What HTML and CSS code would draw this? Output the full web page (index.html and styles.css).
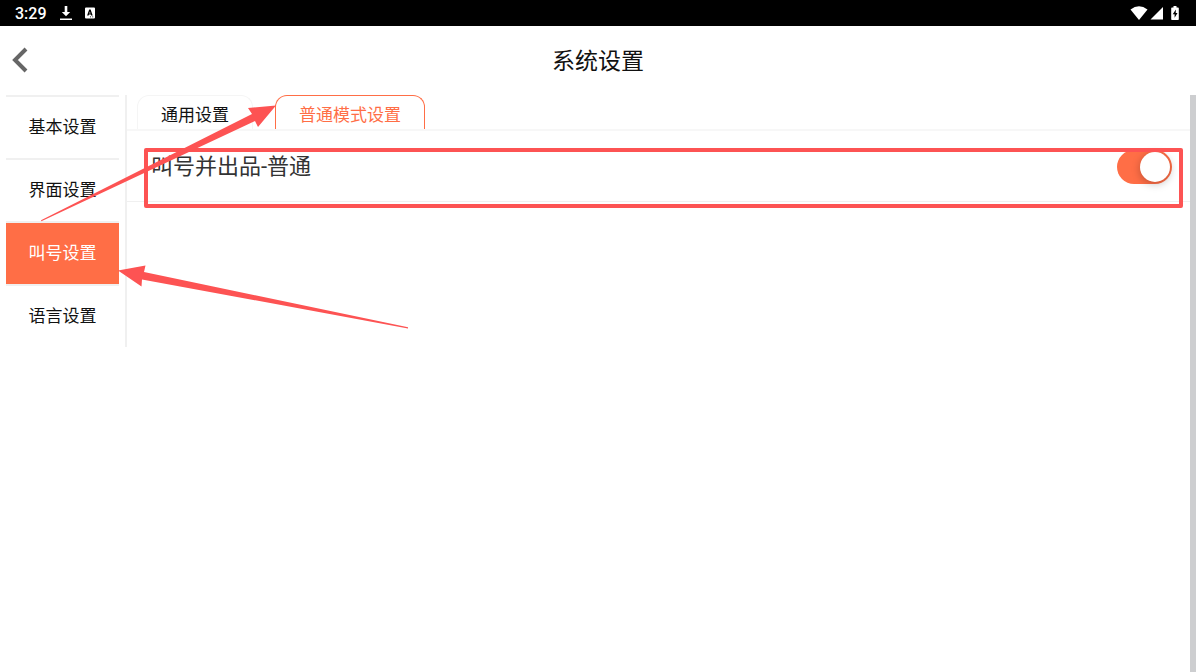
FILE: index.html
```
<!DOCTYPE html>
<html lang="zh-CN">

	<head>
		<meta charset="UTF-8">
		<meta name="viewport" content="width=device-width, initial-scale=1">
		<title>系统设置</title>
		<link rel="stylesheet" href="styles.css">
	</head>

	<body>
		<div class="status">
			<span class="time">3:29</span>
			<svg class="download" width="12" height="16" viewBox="0 0 12 16">
				<path d="M4.7 1h2.6v6h2.9L6 11.2 1.8 7h2.900z" />
				<path d="M0 13.500h12v1.500H0z" />
			</svg>
			<svg class="ime" width="10" height="12" viewBox="0 0 10 12">
				<path fill-rule="evenodd" d="M1 .5h8a1 1 0 0 1 1 1v9a1 1 0 0 1-1 1H1a1 1 0 0 1-1-1v-9a1 1 0 0 1 1-1zM4.200 2.500L2.100 8.600h1.500l.4-1.200h1.800l.4 1.200h1.500L5.600 2.500zM4.900 4.500l.6 1.900H4.300zM5 9.400v.8h1v-.8zM7.200 9.400v.8h1v-.8z" />
			</svg>
			<div class="signals">
				<svg width="18" height="14" viewBox="0 0 18 14">
					<path d="M.5 3.6Q9-3 17.500 3.600L9 14z" />
				</svg>
				<svg width="13" height="14" viewBox="0 0 13 14">
					<path d="M13 1v12.500H.5z" />
				</svg>
				<svg class="battery" width="8" height="14" viewBox="0 0 8 14">
					<path fill-rule="evenodd" d="M2.500 0h3v1.400H7a.8.8 0 0 1 .8.8v11a.8.8 0 0 1-.8.8H1a.8.8 0 0 1-.8-.8v-11a.8.8 0 0 1 .8-.8h1.500zM4.900 3.500L1.700 8.300h1.900v3.500l2.900-4.900H4.700z" />
				</svg>
			</div>
		</div>

		<header class="header">
			<button class="back" type="button" aria-label="返回">
				<svg width="16" height="26" viewBox="0 0 16 26">
					<path d="M14 2L3 13l11 11" />
				</svg>
			</button>
			<h1>系统设置</h1>
		</header>

		<div class="main">
			<nav class="menu">
				<a href="#">基本设置</a>
				<a href="#">界面设置</a>
				<a href="#" class="current">叫号设置</a>
				<a href="#">语言设置</a>
			</nav>

			<section class="content">
				<div class="tabs">
					<button type="button">通用设置</button>
					<button type="button" class="current">普通模式设置</button>
				</div>
				<div class="row">
					<label for="call">叫号并出品-普通</label>
					<input class="switch" type="checkbox" id="call" checked>
					<div class="mark"></div>
				</div>
			</section>

			<div class="scrollbar"></div>

			<!-- 箭头 -->
			<svg class="arrows" width="420" height="240" viewBox="0 0 420 240">
				<path d="M41 125.300L252 19 248 13 276 10.500 258 32 255 26 41.400 126.300z" />
				<path d="M118 175.500L145.500 170.500 144 177 408 232.200 408 233.400 142 184.500 141.500 191.500z" />
			</svg>
		</div>
	</body>

</html>
```

FILE: styles.css
```
* {
	margin: 0;
	padding: 0;
	box-sizing: border-box;
}

body {
	min-height: 100vh;
	display: flex;
	flex-direction: column;
	background: #fff;
	color: #111;
	font-family: Roboto, "Noto Sans CJK SC", sans-serif;
}

button {
	border: none;
	background: none;
	font: inherit;
	color: inherit;
	cursor: pointer;
}

.status {
	height: 26px;
	padding: 0 17px 0 15px;
	display: flex;
	align-items: center;
	background: #000;
	color: #fff;
	font-size: 16px;
	font-weight: 500;
	line-height: 24px;
}

.status svg {
	fill: #fff;
}

.time {
	padding-top: 2px;
}

.download {
	margin-left: 13px;
}

.ime {
	margin-left: 13px;
}

.signals {
	margin-left: auto;
	display: flex;
	align-items: center;
	gap: 2px;
}

.battery {
	margin-left: 6px;
}

.header {
	height: 69px;
	padding: 0 12px 2px;
	display: grid;
	grid-template-columns: 16px 1fr 16px;
	align-items: center;
}

.back {
	height: 26px;
}

.back svg {
	display: block;
	fill: none;
	stroke: #666;
	stroke-width: 4;
}

.header h1 {
	padding-top: 4px;
	font-size: 23px;
	font-weight: 400;
	line-height: 34px;
	text-align: center;
}

.main {
	flex: 1;
	display: flex;
	position: relative;
}

.menu {
	width: 127px;
	align-self: flex-start;
	padding: 0 6px;
	border-right: 2px solid #f0f0f0;
}

.menu a {
	display: block;
	height: 63px;
	border-top: 2px solid #f0f0f0;
	color: #111;
	font-size: 17px;
	line-height: 60px;
	text-align: center;
	text-decoration: none;
}

.menu .current {
	background: #ff6e46;
	color: #fff;
}

.content {
	flex: 1;
}

.tabs {
	height: 36px;
	padding-left: 10px;
	display: flex;
	gap: 22px;
	border-bottom: 2px solid #f7f7f7;
}

.tabs button {
	padding: 0 23px;
	border: 1px solid #f5f5f5;
	border-bottom: none;
	border-radius: 12px 12px 0 0;
	font-size: 17px;
	line-height: 38px;
}

.tabs .current {
	border-color: #ff6e46;
	color: #ff6e46;
}

.row {
	height: 71px;
	padding: 19px 18px 0 24px;
	display: flex;
	justify-content: space-between;
	align-items: flex-start;
	position: relative;
	border-bottom: 1px solid #f0f0f0;
	color: #333;
}

.row label {
	font-size: 22px;
	line-height: 34px;
}

.switch {
	appearance: none;
	width: 55px;
	height: 34px;
	padding: 2px;
	border-radius: 17px;
	background: #ccc;
	cursor: pointer;
}

.switch::before {
	content: "";
	display: block;
	width: 30px;
	height: 30px;
	border-radius: 50%;
	background: #fff;
	box-shadow: 0 2px 8px rgba(0, 0, 0, .25);
}

.switch:checked {
	background: #ff6e46;
}

.switch:checked::before {
	margin-left: auto;
}

.mark {
	position: absolute;
	top: 17px;
	left: 17px;
	right: 7px;
	height: 60px;
	border: 4px solid #fd5353;
	border-radius: 2px;
	pointer-events: none;
}

.scrollbar {
	width: 6px;
	background: #cdced0;
}

.arrows {
	position: absolute;
	top: 0;
	left: 0;
	fill: #fd5353;
	pointer-events: none;
}
```
